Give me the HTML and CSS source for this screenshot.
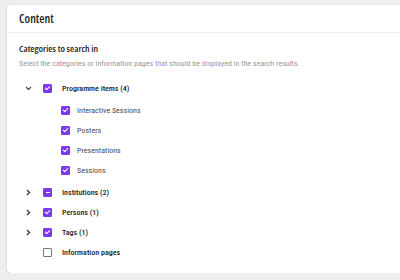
FILE: index.html
```html
<!DOCTYPE html>
<html lang="en">
<head>
    <meta charset="UTF-8">
    <title>Content</title>
    <link rel="stylesheet" href="styles.css">
</head>
<body>

<div class="card">
    <div class="card-header">Content</div>
    <div class="card-body">
        <h3>Categories to search in</h3>
        <p class="hint">Select the categories or information pages that should be displayed in the search results.</p>

        <ul class="tree">
            <li class="row parent">
                <span class="chevron"><svg width="7" height="7" viewBox="0 0 7 7"><path d="M1 2 L3.5 4.5 L6 2" fill="none" stroke="#444" stroke-width="1.2"/></svg></span>
                <span class="box checked"></span>
                <span class="label">Programme items (4)</span>
            </li>
            <li class="row child"><span class="box checked"></span><span class="label">Interactive Sessions</span></li>
            <li class="row child"><span class="box checked"></span><span class="label">Posters</span></li>
            <li class="row child"><span class="box checked"></span><span class="label">Presentations</span></li>
            <li class="row child"><span class="box checked"></span><span class="label">Sessions</span></li>
            <li class="row parent gap">
                <span class="chevron"><svg width="7" height="7" viewBox="0 0 7 7"><path d="M2 1 L4.5 3.5 L2 6" fill="none" stroke="#333" stroke-width="1.3"/></svg></span>
                <span class="box partial"></span>
                <span class="label">Institutions (2)</span>
            </li>
            <li class="row parent">
                <span class="chevron"><svg width="7" height="7" viewBox="0 0 7 7"><path d="M2 1 L4.5 3.5 L2 6" fill="none" stroke="#333" stroke-width="1.3"/></svg></span>
                <span class="box checked"></span>
                <span class="label">Persons (1)</span>
            </li>
            <li class="row parent">
                <span class="chevron"><svg width="7" height="7" viewBox="0 0 7 7"><path d="M2 1 L4.5 3.5 L2 6" fill="none" stroke="#333" stroke-width="1.3"/></svg></span>
                <span class="box checked"></span>
                <span class="label">Tags (1)</span>
            </li>
            <li class="row parent">
                <span class="chevron"></span>
                <span class="box"></span>
                <span class="label">Information pages</span>
            </li>
        </ul>
    </div>
</div>

</body>
</html>
```

FILE: styles.css
```css
body {
    margin: 0;
    padding: 0;
    background-color: #eeeeee;
    overflow: hidden;
    font-family: Roboto, "Liberation Sans", sans-serif;
}
.card {
    margin: 5px 0 0 7px;
    width: 440px;
    height: 268px;
    background: white;
    border-radius: 4px;
    box-shadow: 0 1px 2px rgba(0,0,0,0.25);
}
.card-header {
    height: 27px;
    line-height: 27px;
    padding: 0 12px;
    border-bottom: 1px solid #eeeeee;
    font-family: "Open Sans", sans-serif;
    font-stretch: 75%;
    font-weight: 600;
    font-size: 12px;
    color: #222;
}
.card-body {
    padding: 0 12px;
}
h3 {
    margin: 8px 0 0 0;
    height: 16px;
    line-height: 16px;
    font-family: "Open Sans", sans-serif;
    font-stretch: 75%;
    font-weight: 600;
    font-size: 9.6px;
    color: #222;
}
.hint {
    margin: 0;
    height: 14px;
    line-height: 14px;
    font-size: 8px;
    font-stretch: 87.5%;
    color: #999;
}
.tree {
    list-style: none;
    margin: 7px 0 0 0;
    padding: 0;
}
.row {
    display: flex;
    align-items: center;
    height: 20px;
    font-size: 8px;
    font-stretch: 87.5%;
    color: #4a4a4a;
}
.parent .label {
    font-weight: 500;
    color: #222;
}
.gap {
    margin-top: 2px;
}
.child {
    padding-left: 42px;
}
.parent + .child {
    margin-top: 2px;
}
.chevron {
    width: 24px;
    padding-left: 6px;
    box-sizing: border-box;
    display: flex;
    align-items: center;
}
.box {
    width: 7px;
    height: 7px;
    border: 1px solid #777;
    border-radius: 1px;
    margin-right: 10px;
    box-sizing: content-box;
    position: relative;
}
.child .box {
    margin-right: 7px;
}
.box.checked, .box.partial {
    background: #7c3aed;
    border-color: #7c3aed;
}
.box.checked::after {
    content: "";
    position: absolute;
    left: 2px;
    top: 0;
    width: 2px;
    height: 4px;
    border: solid white;
    border-width: 0 1.2px 1.2px 0;
    transform: rotate(45deg);
}
.box.partial::after {
    content: "";
    position: absolute;
    left: 1.5px;
    top: 3px;
    width: 4px;
    height: 1.2px;
    background: white;
}
```
